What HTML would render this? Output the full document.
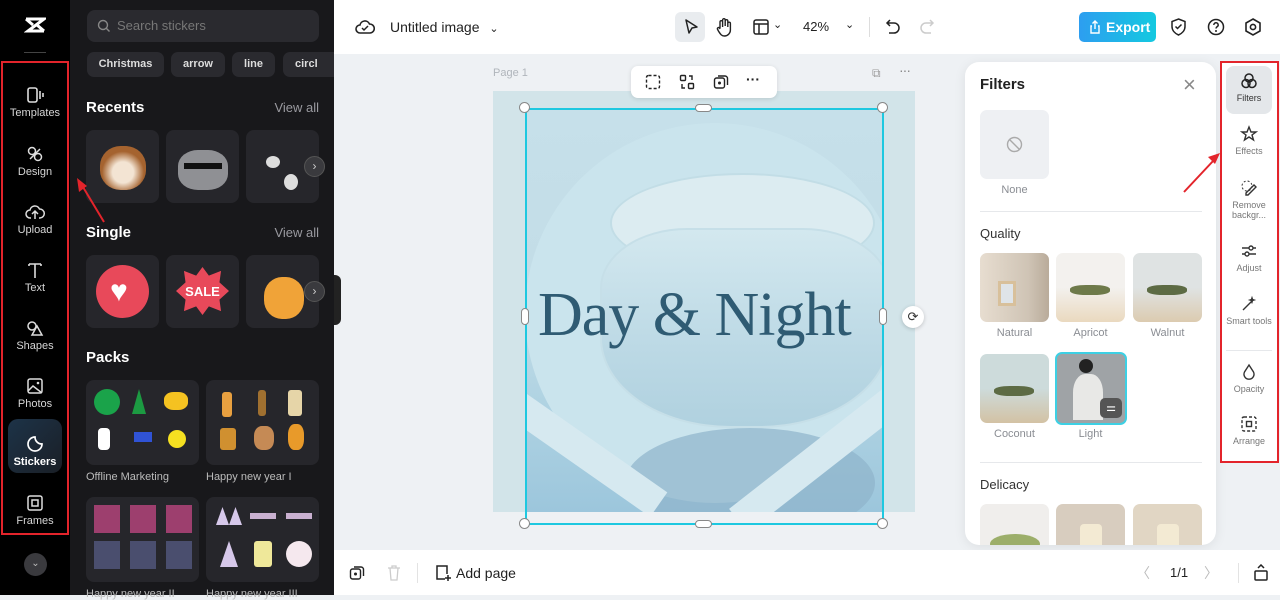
<!DOCTYPE html>
<html><head><meta charset="utf-8"><style>
*{box-sizing:border-box;margin:0;padding:0}
body{width:1280px;height:595px;overflow:hidden;font-family:"Liberation Sans",sans-serif;background:#eef1f4;position:relative}
.abs{position:absolute}
.rail{left:0;top:0;width:70px;height:595px;background:#000}
.ri{position:absolute;left:0;width:70px;text-align:center;color:#d6d6d6;font-size:11px}
.ri svg{display:block;margin:0 auto 3px}
.panel{left:70px;top:0;width:264px;height:595px;background:#18181b;color:#fff}
.tile{position:absolute;background:#26262b;border-radius:8px}
.chip{position:absolute;top:52px;height:25px;background:#2a2a2f;border-radius:7px;color:#ddd;font-size:11px;font-weight:bold;line-height:25px;text-align:center}
.h{position:absolute;left:16px;font-size:15px;font-weight:bold}
.va{position:absolute;right:15px;font-size:13px;color:#9a9aa0}
.top{left:334px;top:0;width:946px;height:54px;background:#fff}
.bot{left:334px;top:550px;width:946px;height:45px;background:#fff}
.fp{left:965px;top:62px;width:251px;height:483px;background:#fff;border-radius:14px;box-shadow:0 2px 12px rgba(0,0,0,.08);overflow:hidden}
.th{position:absolute;width:69px;height:69px;border-radius:7px}
.lb{position:absolute;width:69px;text-align:center;font-size:11px;color:#8a8d93}
.rt{position:absolute;left:0;width:46px;text-align:center;font-size:9px;color:#777;line-height:10px}
.rt svg{display:block;margin:0 auto 3px}
.hd{position:absolute;width:11px;height:11px;border:1px solid #888;border-radius:50%;background:#fff}
</style></head><body>
<!-- left rail -->
<div class="abs rail">
<svg class="abs" style="left:24px;top:17px" width="22" height="16" viewBox="0 0 22 16"><path d="M2 2h18L4 14h16M2 2l7 6M20 14l-7-6" stroke="#fff" stroke-width="3" fill="none"/></svg>
<div class="abs" style="left:24px;top:52px;width:22px;height:1px;background:#444"></div>
<div class="abs" style="left:1px;top:61px;width:68px;height:474px;border:2px solid #e3242b"></div>
<div class="ri" style="top:86px"><svg width="20" height="18" viewBox="0 0 20 18"><rect x="3" y="2" width="9" height="14" rx="2" fill="none" stroke="#ddd" stroke-width="1.6"/><path d="M15 5v8M18 7v4" stroke="#ddd" stroke-width="1.6"/></svg>Templates</div>
<div class="ri" style="top:145px"><svg width="20" height="18" viewBox="0 0 20 18"><circle cx="7" cy="6" r="3.5" fill="none" stroke="#ddd" stroke-width="1.5"/><circle cx="13" cy="12" r="3.5" fill="none" stroke="#ddd" stroke-width="1.5"/><path d="M5 14l10-10" stroke="#ddd" stroke-width="1.5"/></svg>Design</div>
<div class="ri" style="top:203px"><svg width="20" height="18" viewBox="0 0 20 18"><path d="M6 15H5a4 4 0 010-8 5 5 0 019.5-1A4 4 0 0115 15h-1M10 16V9M7 11l3-3 3 3" fill="none" stroke="#ddd" stroke-width="1.5"/></svg>Upload</div>
<div class="ri" style="top:261px"><svg width="20" height="18" viewBox="0 0 20 18"><path d="M4 3h12M10 3v14M4 3v2M16 3v2" stroke="#ddd" stroke-width="1.6" fill="none"/></svg>Text</div>
<div class="ri" style="top:319px"><svg width="20" height="18" viewBox="0 0 20 18"><circle cx="7" cy="7" r="4" fill="none" stroke="#ddd" stroke-width="1.5"/><path d="M12 7l5 9H7z" fill="none" stroke="#ddd" stroke-width="1.5"/></svg>Shapes</div>
<div class="ri" style="top:377px"><svg width="20" height="18" viewBox="0 0 20 18"><rect x="3" y="2" width="14" height="14" rx="2" fill="none" stroke="#ddd" stroke-width="1.5"/><path d="M3 14l5-5 9 7" fill="none" stroke="#ddd" stroke-width="1.5"/><circle cx="13" cy="6" r="1.3" fill="#ddd"/></svg>Photos</div>
<div class="abs" style="left:8px;top:419px;width:54px;height:54px;border-radius:10px;background:linear-gradient(135deg,#1d3348,#1a1f26)"></div>
<div class="ri" style="top:435px;color:#fff;font-weight:bold"><svg width="20" height="18" viewBox="0 0 20 18"><path d="M10 2a7 7 0 107 7c-4 0-7-3-7-7z" fill="none" stroke="#fff" stroke-width="1.7"/></svg>Stickers</div>
<div class="ri" style="top:494px"><svg width="20" height="18" viewBox="0 0 20 18"><rect x="3" y="2" width="14" height="14" rx="2" fill="none" stroke="#ddd" stroke-width="1.5"/><rect x="7" y="6" width="6" height="6" fill="none" stroke="#ddd" stroke-width="1.5"/></svg>Frames</div>
<div class="abs" style="left:24px;top:553px;width:23px;height:23px;border-radius:50%;background:#3a3a3e;color:#bbb;font-size:10px;text-align:center;line-height:22px">⌄</div>
</div>
<!-- sticker panel -->
<div class="abs panel">
<div class="abs" style="left:17px;top:10px;width:232px;height:32px;background:#2a2a2f;border-radius:8px;color:#777;font-size:13px;line-height:32px;padding-left:30px">Search stickers<svg class="abs" style="left:10px;top:9px" width="14" height="14" viewBox="0 0 14 14"><circle cx="6" cy="6" r="4.5" fill="none" stroke="#888" stroke-width="1.4"/><path d="M9.5 9.5l3 3" stroke="#888" stroke-width="1.4"/></svg></div>
<div class="chip" style="left:17px;width:77px">Christmas</div>
<div class="chip" style="left:101px;width:54px">arrow</div>
<div class="chip" style="left:162px;width:43px">line</div>
<div class="chip" style="left:213px;width:51px;text-align:left;padding-left:12px;border-radius:7px 0 0 7px">circl</div>
<div class="h" style="top:99px">Recents</div><div class="va" style="top:100px">View all</div>
<div class="tile" style="left:16px;top:130px;width:73px;height:73px"><div class="abs" style="left:14px;top:16px;width:46px;height:44px;border-radius:45%;background:radial-gradient(circle at 50% 60%,#f3e4d3 30%,#a5632f 60%)"></div></div>
<div class="tile" style="left:96px;top:130px;width:73px;height:73px"><div class="abs" style="left:12px;top:20px;width:50px;height:40px;border-radius:40%;background:#8f9094"></div><div class="abs" style="left:18px;top:33px;width:38px;height:6px;background:#111"></div></div>
<div class="tile" style="left:176px;top:130px;width:73px;height:73px"><div class="abs" style="left:20px;top:26px;width:14px;height:12px;border-radius:50%;background:#ddd"></div><div class="abs" style="left:38px;top:44px;width:14px;height:16px;border-radius:50%;background:#ddd"></div></div>
<div class="abs" style="left:234px;top:156px;width:21px;height:21px;border-radius:50%;background:#3a3a3e;border:1px solid #555;color:#ccc;font-size:12px;text-align:center;line-height:19px">›</div>
<div class="h" style="top:224px">Single</div><div class="va" style="top:225px">View all</div>
<div class="tile" style="left:16px;top:255px;width:73px;height:73px"><div class="abs" style="left:10px;top:10px;width:53px;height:53px;border-radius:50%;background:#e8495a"></div><div class="abs" style="left:24px;top:22px;color:#fff;font-size:30px;line-height:30px">♥</div></div>
<div class="tile" style="left:96px;top:255px;width:73px;height:73px"><div class="abs" style="left:10px;top:12px;width:53px;height:48px;background:#e8495a;clip-path:polygon(50% 0,62% 18%,85% 8%,82% 32%,100% 50%,82% 68%,85% 92%,62% 82%,50% 100%,38% 82%,15% 92%,18% 68%,0 50%,18% 32%,15% 8%,38% 18%)"></div><div class="abs" style="left:14px;top:29px;width:45px;text-align:center;color:#fff;font-size:13px;font-weight:bold">SALE</div></div>
<div class="tile" style="left:176px;top:255px;width:73px;height:73px"><div class="abs" style="left:18px;top:22px;width:40px;height:42px;border-radius:45%;background:#f0a338"></div></div>
<div class="abs" style="left:234px;top:281px;width:21px;height:21px;border-radius:50%;background:#3a3a3e;border:1px solid #555;color:#ccc;font-size:12px;text-align:center;line-height:19px">›</div>
<div class="h" style="top:349px">Packs</div>
<div class="tile" style="left:16px;top:380px;width:113px;height:85px"><div class="abs" style="left:8px;top:9px;width:26px;height:26px;border-radius:50%;background:#1aa34a"></div><div class="abs" style="left:46px;top:9px;width:14px;height:25px;background:#1c9a42;clip-path:polygon(50% 0,100% 100%,0 100%)"></div><div class="abs" style="left:78px;top:12px;width:24px;height:18px;background:#f5c221;border-radius:40%"></div><div class="abs" style="left:12px;top:48px;width:12px;height:22px;background:#fff;border-radius:4px"></div><div class="abs" style="left:48px;top:52px;width:18px;height:10px;background:#3053d6"></div><div class="abs" style="left:82px;top:50px;width:18px;height:18px;background:#f5e021;border-radius:50%"></div></div>
<div class="tile" style="left:136px;top:380px;width:113px;height:85px"><div class="abs" style="left:16px;top:12px;width:10px;height:25px;background:#e8a040;border-radius:3px"></div><div class="abs" style="left:52px;top:10px;width:8px;height:26px;background:#a07030;border-radius:3px"></div><div class="abs" style="left:82px;top:10px;width:14px;height:26px;background:#e6d5a8;border-radius:3px"></div><div class="abs" style="left:14px;top:48px;width:16px;height:22px;background:#d09030;border-radius:3px"></div><div class="abs" style="left:48px;top:46px;width:20px;height:24px;background:#c58a55;border-radius:40%"></div><div class="abs" style="left:82px;top:44px;width:16px;height:26px;background:#e89a2a;border-radius:40%"></div></div>
<div class="abs" style="left:16px;top:471px;font-size:11px;color:#bbb">Offline Marketing</div>
<div class="abs" style="left:136px;top:471px;font-size:11px;color:#bbb">Happy new year I</div>
<div class="tile" style="left:16px;top:497px;width:113px;height:85px"><div class="abs" style="left:8px;top:8px;width:98px;height:28px;background:repeating-linear-gradient(90deg,#d04a8a 0 26px,transparent 26px 36px);opacity:.7"></div><div class="abs" style="left:8px;top:44px;width:98px;height:28px;background:repeating-linear-gradient(90deg,#5a5f8a 0 26px,transparent 26px 36px);opacity:.7"></div></div>
<div class="tile" style="left:136px;top:497px;width:113px;height:85px"><div class="abs" style="left:10px;top:10px;width:26px;height:18px;background:#d6c8ea;clip-path:polygon(0 100%,25% 0,50% 100%,75% 0,100% 100%)"></div><div class="abs" style="left:44px;top:16px;width:26px;height:6px;background:#c9b0d0"></div><div class="abs" style="left:80px;top:16px;width:26px;height:6px;background:#c9b0d0"></div><div class="abs" style="left:14px;top:44px;width:18px;height:26px;background:#d6c8ea;clip-path:polygon(50% 0,100% 100%,0 100%)"></div><div class="abs" style="left:48px;top:44px;width:18px;height:26px;background:#efe89a;border-radius:3px"></div><div class="abs" style="left:80px;top:44px;width:26px;height:26px;background:#f5e8ee;border-radius:50%"></div></div>
<div class="abs" style="left:16px;top:588px;font-size:11px;color:#bbb">Happy new year II</div>
<div class="abs" style="left:136px;top:588px;font-size:11px;color:#bbb">Happy new year III</div>
</div>
<svg class="abs" style="left:70px;top:170px" width="40" height="60" viewBox="0 0 40 60"><path d="M34 52L10 12" stroke="#e3242b" stroke-width="2"/><path d="M7 8l2 14 8-6z" fill="#e3242b"/></svg>
<div class="abs" style="left:334px;top:275px;width:7px;height:50px;background:#222;border-radius:0 6px 6px 0"></div>
<!-- top bar -->
<div class="abs top">
<svg class="abs" style="left:21px;top:18px" width="20" height="18" viewBox="0 0 20 18"><path d="M6 15H5a4 4 0 010-8 5 5 0 019.5-1A4 4 0 0115 15H6z" fill="none" stroke="#222" stroke-width="1.6"/><path d="M7 10l2 2 4-4" fill="none" stroke="#222" stroke-width="1.5"/></svg>
<div class="abs" style="left:56px;top:19px;font-size:14px;color:#222">Untitled image <span style="font-size:11px;margin-left:6px">⌄</span></div>
<div class="abs" style="left:341px;top:12px;width:30px;height:30px;background:#e9ecef;border-radius:6px"></div>
<svg class="abs" style="left:349px;top:18px" width="16" height="18" viewBox="0 0 16 18"><path d="M3 2l11 7-5 1-3 5z" fill="none" stroke="#222" stroke-width="1.5" stroke-linejoin="round"/></svg>
<svg class="abs" style="left:381px;top:17px" width="18" height="20" viewBox="0 0 18 20"><path d="M5 11V5a1.3 1.3 0 012.6 0v5M7.6 9V3a1.3 1.3 0 012.6 0v6M10.2 9V4a1.3 1.3 0 012.6 0v6M12.8 9V6.5a1.3 1.3 0 012.6 0V13a6 6 0 01-6 6c-3 0-4-2-6-5l-1-2a1.3 1.3 0 012.3-1L5 12" fill="none" stroke="#222" stroke-width="1.4"/></svg>
<svg class="abs" style="left:418px;top:18px" width="18" height="18" viewBox="0 0 18 18"><rect x="2" y="2" width="14" height="14" rx="2" fill="none" stroke="#222" stroke-width="1.5"/><path d="M2 6h14M7 6v10" stroke="#222" stroke-width="1.5"/></svg>
<div class="abs" style="left:439px;top:18px;font-size:11px;color:#222">⌄</div>
<div class="abs" style="left:469px;top:19px;font-size:13px;color:#222">42%</div>
<div class="abs" style="left:511px;top:18px;font-size:11px;color:#222">⌄</div>
<div class="abs" style="left:535px;top:17px;width:1px;height:20px;background:#ddd"></div>
<svg class="abs" style="left:551px;top:18px" width="16" height="18" viewBox="0 0 16 18"><path d="M5 2L2 5l3 3M2 5h7a5 5 0 010 10H4" fill="none" stroke="#222" stroke-width="1.5"/></svg>
<svg class="abs" style="left:585px;top:18px" width="16" height="18" viewBox="0 0 16 18"><path d="M11 2l3 3-3 3M14 5H7a5 5 0 000 10h5" fill="none" stroke="#ccc" stroke-width="1.5"/></svg>
<div class="abs" style="left:745px;top:12px;width:77px;height:30px;border-radius:5px;background:linear-gradient(90deg,#2d9ef0,#14c9e0);color:#fff;font-size:14px;font-weight:bold;line-height:30px;padding-left:27px">Export<svg class="abs" style="left:10px;top:8px" width="12" height="14" viewBox="0 0 12 14"><path d="M3 6H2v7h8V6H9M6 9V1M3.5 3.5L6 1l2.5 2.5" fill="none" stroke="#fff" stroke-width="1.4"/></svg></div>
<svg class="abs" style="left:836px;top:17px" width="17" height="20" viewBox="0 0 17 20"><path d="M8.5 2L15 4.5v5c0 4-3 7-6.5 8.5C5 16.5 2 13.5 2 9.5v-5z" fill="none" stroke="#222" stroke-width="1.5"/><path d="M5.5 9.5l2 2 4-4" fill="none" stroke="#222" stroke-width="1.5"/></svg>
<svg class="abs" style="left:872px;top:17px" width="20" height="20" viewBox="0 0 20 20"><circle cx="10" cy="10" r="7.5" fill="none" stroke="#222" stroke-width="1.5"/><path d="M7.8 8a2.2 2.2 0 114 1.2c-.8.6-1.8 1-1.8 2.3" fill="none" stroke="#222" stroke-width="1.5"/><circle cx="10" cy="14" r="1" fill="#222"/></svg>
<svg class="abs" style="left:909px;top:17px" width="20" height="20" viewBox="0 0 20 20"><path d="M10 2l7 4v8l-7 4-7-4V6z" fill="none" stroke="#222" stroke-width="1.6"/><circle cx="10" cy="10" r="2.6" fill="none" stroke="#222" stroke-width="1.6"/></svg>
</div>
<!-- canvas -->
<div class="abs" style="left:493px;top:67px;font-size:11px;color:#b0b5bb">Page 1</div>
<div class="abs" style="left:872px;top:66px;font-size:12px;color:#999">⧉</div>
<div class="abs" style="left:899px;top:62px;font-size:14px;color:#888;letter-spacing:-1px">···</div>
<div class="abs" style="left:493px;top:91px;width:422px;height:421px;background:#d2e4e9"></div>
<div class="abs" style="left:525px;top:108px;width:358px;height:404px;overflow:hidden;background:linear-gradient(180deg,#c6e0ea 0%,#c2dce6 50%,#aed2e2 75%,#9cc6dc 100%)">
 <div class="abs" style="left:0;top:15px;width:380px;height:380px;border-radius:50%;background:#cae4ed"></div>
 <div class="abs" style="left:85px;top:65px;width:265px;height:100px;border-radius:50%;background:#dcecf1;border:2px solid #c2dde6"></div>
 <div class="abs" style="left:75px;top:120px;width:290px;height:200px;border-radius:30% 30% 45% 45%;background:linear-gradient(180deg,#d3e8ef,#bcd9e5 60%,#b0d1df);border:2px solid #c6dfe8"></div>
 <div class="abs" style="left:100px;top:320px;width:250px;height:110px;border-radius:50%;background:#8fb4cb;opacity:.7"></div>
 <div class="abs" style="left:-30px;top:330px;width:180px;height:30px;background:#d6e9f0;transform:rotate(35deg)"></div>
 <div class="abs" style="left:190px;top:330px;width:220px;height:30px;background:#d6e9f0;transform:rotate(-38deg)"></div>
</div>
<div class="abs" style="left:538px;top:280px;font-family:'Liberation Serif',serif;font-size:62px;color:#2f5b73;letter-spacing:-1px;white-space:nowrap">Day &amp; Night</div>
<div class="abs" style="left:525px;top:108px;width:359px;height:417px;border:2px solid #1ec8e0"></div>
<div class="hd" style="left:519px;top:102px"></div><div class="hd" style="left:877px;top:102px"></div><div class="hd" style="left:519px;top:518px"></div><div class="hd" style="left:877px;top:518px"></div>
<div class="hd" style="left:695px;top:104px;width:17px;height:8px;border-radius:4px"></div><div class="hd" style="left:695px;top:520px;width:17px;height:8px;border-radius:4px"></div>
<div class="hd" style="left:521px;top:308px;width:8px;height:17px;border-radius:4px"></div><div class="hd" style="left:879px;top:308px;width:8px;height:17px;border-radius:4px"></div>
<div class="abs" style="left:902px;top:306px;width:22px;height:22px;border-radius:50%;background:#fff;box-shadow:0 1px 4px rgba(0,0,0,.2);font-size:13px;text-align:center;line-height:22px;color:#333">⟳</div>
<div class="abs" style="left:631px;top:66px;width:146px;height:32px;background:#fff;border-radius:7px;box-shadow:0 1px 5px rgba(0,0,0,.12)"></div>
<svg class="abs" style="left:645px;top:74px" width="16" height="16"><rect x="1.5" y="1.5" width="13" height="13" rx="2" fill="none" stroke="#222" stroke-width="1.4" stroke-dasharray="3 2"/></svg>
<svg class="abs" style="left:679px;top:74px" width="16" height="16"><rect x="1.5" y="1.5" width="5" height="5" rx="1" fill="none" stroke="#222" stroke-width="1.4"/><rect x="9.5" y="9.5" width="5" height="5" rx="1" fill="none" stroke="#222" stroke-width="1.4"/><path d="M10 2h3v4M6 14H3v-4" fill="none" stroke="#222" stroke-width="1.4"/></svg>
<svg class="abs" style="left:713px;top:74px" width="16" height="16"><rect x="1.5" y="4" width="10" height="10" rx="2" fill="none" stroke="#222" stroke-width="1.4"/><path d="M5 2h7a2.5 2.5 0 012.5 2.5V11" fill="none" stroke="#222" stroke-width="1.4"/><circle cx="6.5" cy="9" r="1.5" fill="#222"/></svg>
<div class="abs" style="left:746px;top:71px;font-size:14px;font-weight:bold;color:#222">···</div>
<!-- filters panel -->
<div class="abs fp">
<div class="abs" style="left:15px;top:14px;font-size:15px;font-weight:bold;color:#222">Filters</div>
<div class="abs" style="left:218px;top:10px;font-size:22px;color:#888;font-weight:300">×</div>
<div class="th" style="left:15px;top:48px;background:#eef0f3"><svg class="abs" style="left:26px;top:26px" width="17" height="17"><circle cx="8.5" cy="8.5" r="7" fill="none" stroke="#aaa" stroke-width="1.4"/><path d="M3.5 3.5l10 10" stroke="#aaa" stroke-width="1.4"/></svg></div>
<div class="lb" style="left:15px;top:122px">None</div>
<div class="abs" style="left:15px;top:149px;width:222px;height:1px;background:#e6e8eb"></div>
<div class="abs" style="left:15px;top:164px;font-size:13px;color:#333">Quality</div>
<div class="th" style="left:15px;top:191px;background:linear-gradient(90deg,#e7ddd0,#cfc4b5 70%,#b9ab9a)"><div class="abs" style="left:18px;top:28px;width:18px;height:25px;border:3px solid #d8c09b;background:#dfe4e8"></div></div>
<div class="th" style="left:91px;top:191px;background:linear-gradient(180deg,#f3f1ee 50%,#ead9bf)"><div class="abs" style="left:14px;top:32px;width:40px;height:10px;background:#6e7a4a;border-radius:40%"></div></div>
<div class="th" style="left:168px;top:191px;background:linear-gradient(180deg,#dfe3e3 50%,#dccbb0)"><div class="abs" style="left:14px;top:32px;width:40px;height:10px;background:#5d6b44;border-radius:40%"></div></div>
<div class="lb" style="left:15px;top:265px">Natural</div><div class="lb" style="left:91px;top:265px">Apricot</div><div class="lb" style="left:168px;top:265px">Walnut</div>
<div class="th" style="left:15px;top:292px;background:linear-gradient(180deg,#cddbdb 50%,#d3c2a4)"><div class="abs" style="left:14px;top:32px;width:40px;height:10px;background:#5d6b44;border-radius:40%"></div></div>
<div class="th" style="left:90px;top:290px;width:72px;height:73px;border:2px solid #3dd0e4;background:#9fa3a6"><div class="abs" style="left:22px;top:5px;width:14px;height:14px;border-radius:50%;background:#222"></div><div class="abs" style="left:16px;top:20px;width:30px;height:46px;background:#e8e8e6;border-radius:40% 40% 0 0"></div><div class="abs" style="left:43px;top:44px;width:22px;height:20px;border-radius:5px;background:#555;color:#fff;font-size:11px;text-align:center;line-height:20px">⚌</div></div>
<div class="lb" style="left:15px;top:366px">Coconut</div><div class="lb" style="left:91px;top:366px">Light</div>
<div class="abs" style="left:15px;top:400px;width:222px;height:1px;background:#e6e8eb"></div>
<div class="abs" style="left:15px;top:415px;font-size:13px;color:#333">Delicacy</div>
<div class="th" style="left:15px;top:442px;background:#f0eeec"><div class="abs" style="left:10px;top:30px;width:50px;height:20px;border-radius:50%;background:#9cae6a"></div></div>
<div class="th" style="left:91px;top:442px;background:#d8cdbf"><div class="abs" style="left:24px;top:20px;width:22px;height:40px;background:#f3ead3;border-radius:4px"></div></div>
<div class="th" style="left:168px;top:442px;background:#e1d6c4"><div class="abs" style="left:24px;top:20px;width:22px;height:40px;background:#f3ead3;border-radius:4px"></div></div>
</div>
<svg class="abs" style="left:1180px;top:150px" width="44" height="46" viewBox="0 0 44 46"><path d="M4 42L34 10" stroke="#e3242b" stroke-width="2"/><path d="M40 3l-12 4 7 7z" fill="#e3242b"/></svg>
<!-- right rail -->
<div class="abs" style="left:1220px;top:61px;width:59px;height:402px;border:2px solid #e3242b;background:#fff"></div>
<div class="abs" style="left:1226px;top:66px;width:46px;height:48px;background:#e4e7ea;border-radius:8px"></div>
<div class="rt" style="left:1226px;top:72px;color:#333"><svg width="18" height="18" viewBox="0 0 18 18"><circle cx="9" cy="6" r="4" fill="none" stroke="#222" stroke-width="1.5"/><circle cx="6" cy="11.5" r="4" fill="none" stroke="#222" stroke-width="1.5"/><circle cx="12" cy="11.5" r="4" fill="none" stroke="#222" stroke-width="1.5"/></svg>Filters</div>
<div class="rt" style="left:1226px;top:125px"><svg width="18" height="18" viewBox="0 0 18 18"><path d="M9 2l2 5h5l-4 3 1.5 5L9 12l-4.5 3L6 10 2 7h5z" fill="none" stroke="#333" stroke-width="1.4"/></svg>Effects</div>
<div class="rt" style="left:1226px;top:179px"><svg width="18" height="18" viewBox="0 0 18 18"><path d="M6 14l8-8 2 2-8 8H6z" fill="none" stroke="#333" stroke-width="1.4"/><circle cx="7" cy="7" r="5" fill="none" stroke="#333" stroke-width="1" stroke-dasharray="2 2"/></svg>Remove backgr...</div>
<div class="rt" style="left:1226px;top:242px"><svg width="18" height="18" viewBox="0 0 18 18"><path d="M2 6h14M2 12h14" stroke="#333" stroke-width="1.4"/><circle cx="11" cy="6" r="2" fill="#fff" stroke="#333" stroke-width="1.4"/><circle cx="7" cy="12" r="2" fill="#fff" stroke="#333" stroke-width="1.4"/></svg>Adjust</div>
<div class="rt" style="left:1226px;top:295px"><svg width="18" height="18" viewBox="0 0 18 18"><path d="M3 15l9-9M12 3l.5 1.5L14 5l-1.5.5L12 7l-.5-1.5L10 5l1.5-.5z" fill="none" stroke="#333" stroke-width="1.4"/></svg>Smart tools</div>
<div class="abs" style="left:1226px;top:350px;width:46px;height:1px;background:#e6e8eb"></div>
<div class="rt" style="left:1226px;top:363px"><svg width="18" height="18" viewBox="0 0 18 18"><path d="M9 2l4.5 7a5 5 0 11-9 0z" fill="none" stroke="#333" stroke-width="1.4"/></svg>Opacity</div>
<div class="rt" style="left:1226px;top:415px"><svg width="18" height="18" viewBox="0 0 18 18"><rect x="2" y="2" width="14" height="14" rx="2" fill="none" stroke="#333" stroke-width="1.4" stroke-dasharray="3 2"/><rect x="6.5" y="6.5" width="5" height="5" fill="none" stroke="#333" stroke-width="1.4"/></svg>Arrange</div>
<!-- bottom bar -->
<div class="abs bot">
<svg class="abs" style="left:15px;top:15px" width="16" height="16"><rect x="1.5" y="4" width="10" height="10" rx="2" fill="none" stroke="#222" stroke-width="1.4"/><path d="M5 2h7a2.5 2.5 0 012.5 2.5V11" fill="none" stroke="#222" stroke-width="1.4"/><circle cx="6.5" cy="9" r="1.5" fill="#222"/></svg>
<svg class="abs" style="left:53px;top:15px" width="14" height="16"><path d="M1 3h12M5 3V1h4v2M3 3l1 12h6l1-12" fill="none" stroke="#ccc" stroke-width="1.3"/></svg>
<div class="abs" style="left:83px;top:13px;width:1px;height:20px;background:#e3e3e3"></div>
<svg class="abs" style="left:100px;top:14px" width="18" height="18"><path d="M11 15H3V2h10v8" fill="none" stroke="#222" stroke-width="1.5"/><path d="M14 11v6M11 14h6" stroke="#222" stroke-width="1.5"/></svg>
<div class="abs" style="left:122px;top:15px;font-size:14px;color:#222">Add page</div>
<div class="abs" style="left:802px;top:13px;font-size:14px;color:#bbb">〈</div>
<div class="abs" style="left:836px;top:15px;font-size:13px;color:#222">1/1</div>
<div class="abs" style="left:870px;top:13px;font-size:14px;color:#bbb">〉</div>
<div class="abs" style="left:904px;top:13px;width:1px;height:20px;background:#e3e3e3"></div>
<svg class="abs" style="left:919px;top:14px" width="16" height="18"><rect x="2" y="7" width="12" height="9" rx="1" fill="none" stroke="#222" stroke-width="1.5"/><path d="M5 4l3-3 3 3" fill="none" stroke="#222" stroke-width="1.5"/></svg>
</div>
</body></html>
